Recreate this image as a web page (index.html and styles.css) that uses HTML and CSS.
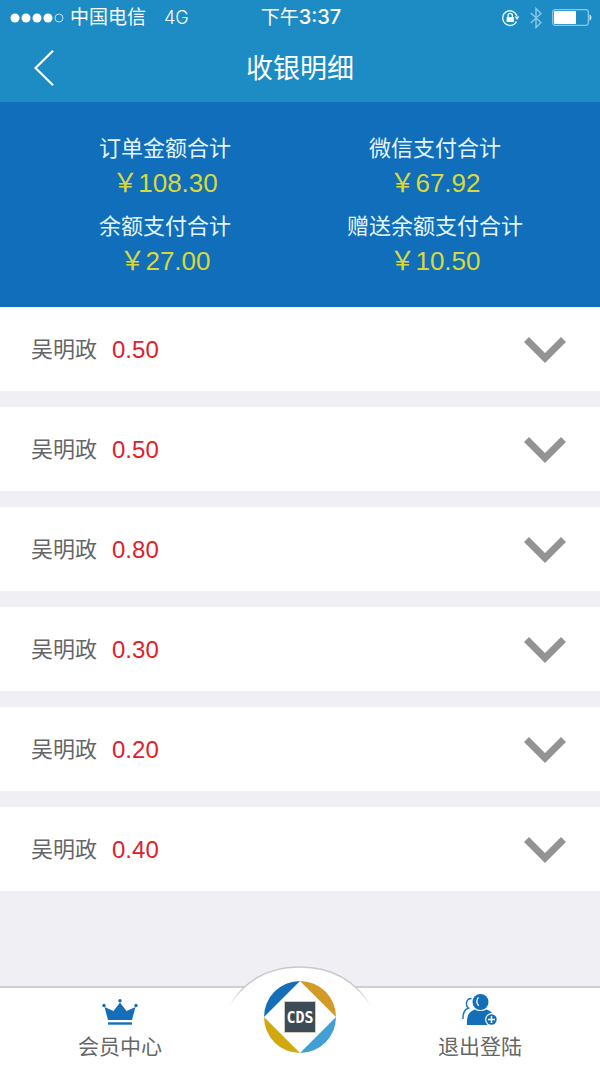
FILE: index.html
```html
<!DOCTYPE html>
<html lang="zh-CN">
<head>
<meta charset="utf-8">
<meta name="viewport" content="width=device-width, initial-scale=1">
<title>收银明细</title>
<link rel="stylesheet" href="styles.css">
</head>
<body>
<div class="app">
  <header class="header">
    <div class="status">
      <div class="status-left">
        <svg class="signal" width="54" height="10" viewBox="0 0 54 10" aria-hidden="true">
          <g fill="#fff"><circle cx="5" cy="5" r="4.5"/><circle cx="16" cy="5" r="4.5"/><circle cx="27" cy="5" r="4.5"/><circle cx="38" cy="5" r="4.5"/></g>
          <circle cx="49" cy="5" r="4" fill="none" stroke="#b9e4f5" stroke-width="1"/>
        </svg>
        <span>中国电信</span>
        <span class="network">4G</span>
      </div>
      <div class="status-time">下午<span class="clock">3:37</span></div>
      <div class="status-right">
        <svg width="19" height="18" viewBox="0 0 19 18" aria-hidden="true">
          <path d="M15.5 12.5A7.3 7.3 0 1 1 16 7" fill="none" stroke="#e6f6fc" stroke-width="1.4"/>
          <path d="M13.5 7.500h5l-2.500 3.400z" fill="#e6f6fc"/>
          <rect x="5.600" y="8" width="7.200" height="5" rx=".6" fill="#fff"/>
          <path d="M7 8V6.500a2.200 2.200 0 0 1 4.400 0V8" fill="none" stroke="#fff" stroke-width="1.300"/>
        </svg>
        <svg width="12" height="22" viewBox="0 0 12 22" aria-hidden="true">
          <path d="M.8 6 11 15.500 6 20.500V1.500L11 6.500.8 16" fill="none" stroke="#86c6e6" stroke-width="1.500"/>
        </svg>
        <svg class="battery" width="40" height="17" viewBox="0 0 40 17" aria-hidden="true">
          <rect x=".7" y=".7" width="35.600" height="15.600" rx="2.500" fill="none" stroke="#8fcbe8" stroke-width="1.200"/>
          <rect x="2" y="2" width="22" height="13" rx="1" fill="#fff"/>
          <path d="M37.500 5.500q2 .5 2 3t-2 3z" fill="#c5e6f5"/>
        </svg>
      </div>
    </div>
    <div class="titlebar">
      <button class="back" type="button" aria-label="返回">
        <svg width="20" height="36" viewBox="0 0 20 36" aria-hidden="true"><path d="M19 .8 1.500 18 19 35.200" fill="none" stroke="#fff" stroke-width="2.200"/></svg>
      </button>
      <h1 class="title">收银明细</h1>
    </div>
  </header>

  <dl class="summary">
    <div class="total"><dt>订单金额合计</dt><dd>￥108.30</dd></div>
    <div class="total"><dt>微信支付合计</dt><dd>￥67.92</dd></div>
    <div class="total"><dt>余额支付合计</dt><dd>￥27.00</dd></div>
    <div class="total"><dt>赠送余额支付合计</dt><dd>￥10.50</dd></div>
  </dl>

  <main class="records">
    <button class="record" type="button" aria-expanded="false"><span class="name">吴明政</span><span class="amount">0.50</span><svg class="chevron" width="42" height="26" viewBox="0 0 42 26" aria-hidden="true"><path d="M2.500 2.500 21 21 39.500 2.500"/></svg></button>
    <button class="record" type="button" aria-expanded="false"><span class="name">吴明政</span><span class="amount">0.50</span><svg class="chevron" width="42" height="26" viewBox="0 0 42 26" aria-hidden="true"><path d="M2.500 2.500 21 21 39.500 2.500"/></svg></button>
    <button class="record" type="button" aria-expanded="false"><span class="name">吴明政</span><span class="amount">0.80</span><svg class="chevron" width="42" height="26" viewBox="0 0 42 26" aria-hidden="true"><path d="M2.500 2.500 21 21 39.500 2.500"/></svg></button>
    <button class="record" type="button" aria-expanded="false"><span class="name">吴明政</span><span class="amount">0.30</span><svg class="chevron" width="42" height="26" viewBox="0 0 42 26" aria-hidden="true"><path d="M2.500 2.500 21 21 39.500 2.500"/></svg></button>
    <button class="record" type="button" aria-expanded="false"><span class="name">吴明政</span><span class="amount">0.20</span><svg class="chevron" width="42" height="26" viewBox="0 0 42 26" aria-hidden="true"><path d="M2.500 2.500 21 21 39.500 2.500"/></svg></button>
    <button class="record" type="button" aria-expanded="false"><span class="name">吴明政</span><span class="amount">0.40</span><svg class="chevron" width="42" height="26" viewBox="0 0 42 26" aria-hidden="true"><path d="M2.500 2.500 21 21 39.500 2.500"/></svg></button>
  </main>

  <nav class="tabs">
    <a class="tab" href="#member">
      <svg width="36" height="27" viewBox="0 0 36 27" aria-hidden="true">
        <g fill="#146fb8">
          <circle cx="18" cy="1.800" r="1.700"/><circle cx="2" cy="6.500" r="1.700"/><circle cx="34" cy="6.500" r="1.700"/>
          <path d="M2.500 8 11.500 12 18 3.500 24.500 12 33.500 8 30 21H6z"/>
          <path d="M6 23.300h24v2.400H6z"/>
        </g>
      </svg>
      <span>会员中心</span>
    </a>
    <a class="home" href="#home" aria-label="CDS">
      <svg class="emblem" width="144" height="102" viewBox="0 0 144 102">
        <defs>
          <linearGradient id="rim" x1="0" y1="0" x2="0" y2="40" gradientUnits="userSpaceOnUse">
            <stop offset=".5" stop-color="#c9c8cc"/><stop offset="1" stop-color="#c9c8cc" stop-opacity="0"/>
          </linearGradient>
        </defs>
        <path d="M0 42Q24 1 72 1t72 41z" fill="#fff"/>
        <path d="M0 42Q24 1 72 1t72 41" fill="none" stroke="url(#rim)" stroke-width="1.500"/>
        <path d="M36 51A36 36 0 0 1 72 15z" fill="#146fb8"/>
        <path d="M72 15a36 36 0 0 1 36 36z" fill="#d29a26"/>
        <path d="M108 51A36 36 0 0 1 72 87z" fill="#429fd6"/>
        <path d="M72 87A36 36 0 0 1 36 51z" fill="#cfa90f"/>
        <rect x="56.500" y="35.500" width="31" height="31" fill="#3c4b55" stroke="#c9cdb9"/>
        <text class="emblem-text" x="72" y="57" text-anchor="middle">CDS</text>
      </svg>
    </a>
    <a class="tab" href="#logout">
      <svg width="36" height="32" viewBox="0 0 36 32" aria-hidden="true">
        <path d="M9.500 4.500C4 4.500 3 11.500 6.500 14 2 15.500.8 19 1 25" fill="none" stroke="#146fb8" stroke-width="1.400"/>
        <circle cx="18.500" cy="8" r="8" fill="#146fb8"/>
        <path d="M16.500 3.300q-3.500 4 .3 8.500" fill="none" stroke="#fff" stroke-width="1.200"/>
        <path d="M5 31c-.5-9 1.500-13 7.500-15.500q6 3 12 0c4 1.500 6.500 3.500 7.500 7.500L25 31z" fill="#146fb8"/>
        <circle cx="29.500" cy="25.500" r="6.400" fill="#fff"/>
        <circle cx="29.500" cy="25.500" r="5.200" fill="#146fb8"/>
        <path d="M26 25.500h7M29.500 22v7" stroke="#fff" stroke-width="1.500"/>
      </svg>
      <span>退出登陆</span>
    </a>
  </nav>
</div>
</body>
</html>
```
FILE: styles.css
```css
* {
  box-sizing: border-box;
}

body {
  margin: 0;
  background: #efeff4;
  font-family: "Liberation Sans", "Noto Sans CJK SC", sans-serif;
}

svg {
  display: block;
}

button {
  border: 0;
  padding: 0;
  background: none;
  font: inherit;
  cursor: pointer;
}

.app {
  min-height: 100vh;
  display: flex;
  flex-direction: column;
}

.header {
  background: #1d8bc4;
  color: #fff;
}

.status {
  display: grid;
  grid-template-columns: 1fr auto 1fr;
  align-items: center;
  height: 34px;
  padding: 0 8px 0 10px;
  font-family: Inter, "Noto Sans CJK SC", sans-serif;
  font-size: 19px;
  line-height: 34px;
}

.status-left,
.status-right {
  display: flex;
  align-items: center;
}

.status-left {
  gap: 6px;
}

.network {
  margin-left: 12px;
  font-size: 18px;
  font-weight: 300;
}

.clock {
  font-size: 20px;
  font-weight: 500;
}

.status-right {
  justify-content: flex-end;
  gap: 10px;
}

.titlebar {
  display: grid;
  grid-template-columns: 1fr auto 1fr;
  align-items: center;
  height: 68px;
  padding: 0 34px;
}

.back {
  justify-self: start;
  color: #fff;
}

.title {
  margin: 0;
  padding-top: 2px;
  font-size: 27px;
  font-weight: 400;
  line-height: 66px;
}

.summary {
  display: grid;
  grid-template-columns: 1fr 1fr;
  row-gap: 10px;
  margin: 0;
  padding: 30px 30px 29px;
  background: #106eba;
  text-align: center;
  line-height: 34px;
}

.total dt {
  color: #e3f6fc;
  font-size: 22px;
}

.total dd {
  margin: 0;
  color: #d9d83a;
  font-size: 26px;
}

.records {
  flex: 1;
  display: flex;
  flex-direction: column;
  gap: 16px;
  padding-bottom: 40px;
}

.record {
  display: flex;
  align-items: center;
  gap: 15px;
  height: 84px;
  padding: 2px 34px 0 31px;
  background: #fff;
  line-height: 34px;
  text-align: left;
}

.name {
  color: #666;
  font-size: 22px;
}

.amount {
  color: #e0202a;
  font-size: 24px;
}

.chevron {
  margin-left: auto;
  fill: none;
  stroke: #939393;
  stroke-width: 7px;
}

.tabs {
  display: grid;
  grid-template-columns: 2fr 1fr 2fr;
  height: 82px;
  border-top: 2px solid #cfced3;
  background: #fff;
}

.tab {
  display: flex;
  flex-direction: column;
  align-items: center;
  justify-content: flex-end;
  gap: 7px;
  padding-bottom: 7px;
  color: #666;
  font-size: 21px;
  line-height: 28px;
  text-decoration: none;
}

.home {
  position: relative;
}

.emblem {
  position: absolute;
  bottom: 0;
  left: 50%;
  transform: translateX(-50%);
}

.emblem-text {
  fill: #fff;
  font-family: "DejaVu Sans Mono", monospace;
  font-size: 15px;
  font-weight: 700;
}
```
